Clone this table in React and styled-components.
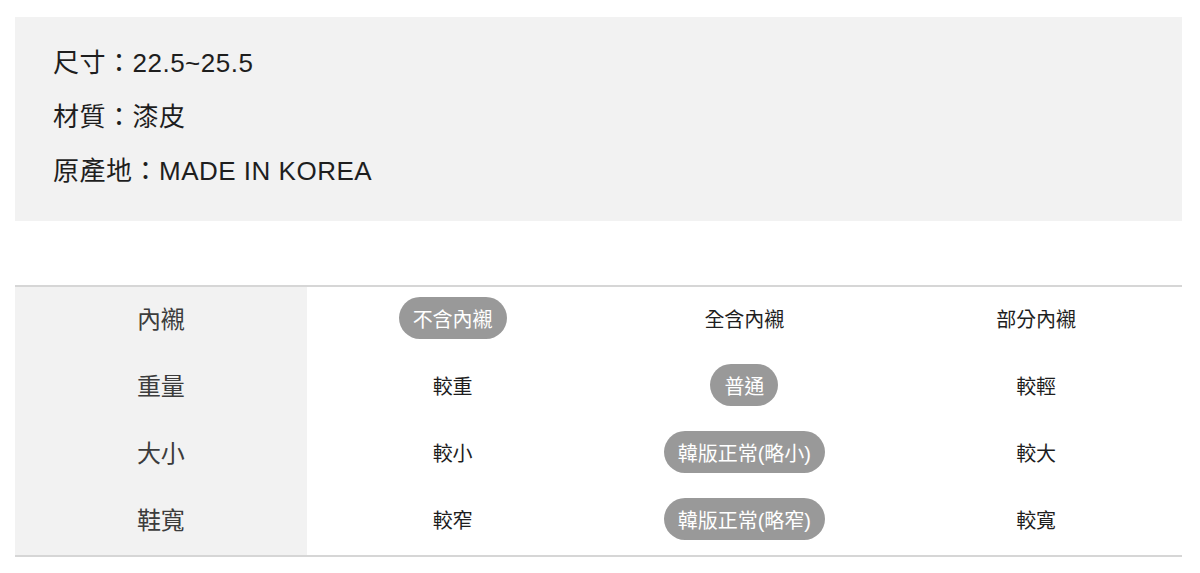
import React from "react";
import styled, { createGlobalStyle } from "styled-components";

const GlobalStyle = createGlobalStyle`
  body {
    margin: 0;
    background: #fff;
    font-family: "Liberation Sans", "Noto Sans CJK TC", sans-serif;
  }
`;

const Page = styled.div`
  padding: 17px 18px 0 15px;
`;

// start InfoBox
const InfoBox = styled.div`
  background-color: #f2f2f2;
  padding: 19px 38px 23px;
`;

const InfoLine = styled.p`
  margin: 0;
  font-size: 26px;
  line-height: 54px;
  letter-spacing: 0.5px;
  color: #1e1e1e;
`;
// end InfoBox

// start SizeTable
const SizeTable = styled.div`
  margin-top: 64px;
  display: grid;
  grid-template-columns: repeat(4, 1fr);
  grid-auto-rows: 67px;
  border-top: 2px solid #d6d6d6;
  border-bottom: 2px solid #d6d6d6;
`;

const Label = styled.div`
  display: flex;
  align-items: center;
  justify-content: center;
  padding-bottom: 6px;
  background-color: #f2f2f2;
  font-size: 24px;
  color: #3c3c3c;
`;

const Cell = styled.div`
  display: flex;
  align-items: center;
  justify-content: center;
  padding-bottom: 5px;
  font-size: 20px;
  color: #1e1e1e;
`;

const Pill = styled.span`
  display: inline-flex;
  align-items: center;
  height: 42px;
  padding: 0 14px;
  border-radius: 21px;
  background-color: ${(props) => (props.active ? "#999" : "transparent")};
  color: ${(props) => (props.active ? "#fff" : "#1e1e1e")};
`;
// end SizeTable

const info = ["尺寸：22.5~25.5", "材質：漆皮", "原產地：MADE IN KOREA"];

const rows = [
  { label: "內襯", options: ["不含內襯", "全含內襯", "部分內襯"], active: 0 },
  { label: "重量", options: ["較重", "普通", "較輕"], active: 1 },
  { label: "大小", options: ["較小", "韓版正常(略小)", "較大"], active: 1 },
  { label: "鞋寬", options: ["較窄", "韓版正常(略窄)", "較寬"], active: 1 },
];

const App = () => {
  return (
    <>
      <GlobalStyle />
      <Page>
        <InfoBox>
          {info.map((line) => (
            <InfoLine key={line}>{line}</InfoLine>
          ))}
        </InfoBox>

        <SizeTable>
          {rows.map((row) => (
            <React.Fragment key={row.label}>
              <Label>{row.label}</Label>
              {row.options.map((opt, i) => (
                <Cell key={opt}>
                  <Pill active={i === row.active}>{opt}</Pill>
                </Cell>
              ))}
            </React.Fragment>
          ))}
        </SizeTable>
      </Page>
    </>
  );
};

export default App;
